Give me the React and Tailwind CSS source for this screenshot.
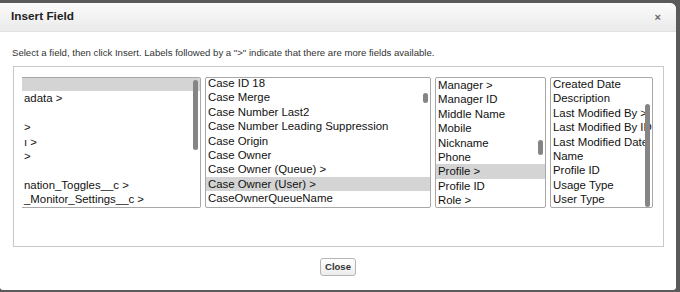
import React from 'react';

const lists = [
    {
        width: 'w-[179px]',
        first: 'border-l-0 rounded-l-none',
        offset: '-mt-[1px]',
        selected: 0,
        thumb: 'top-[2px] h-[70px]',
        items: ['', 'adata >', '', '>', '\u0131 >', '>', '', 'nation_Toggles__c >', '_Monitor_Settings__c >'],
    },
    {
        width: 'w-[226px]',
        first: '',
        offset: '-mt-[2px]',
        selected: 7,
        thumb: 'top-[15px] h-[10px]',
        items: ['Case ID 18', 'Case Merge', 'Case Number Last2', 'Case Number Leading Suppression', 'Case Origin', 'Case Owner', 'Case Owner (Queue) >', 'Case Owner (User) >', 'CaseOwnerQueueName'],
    },
    {
        width: 'w-[111px]',
        first: '',
        offset: '',
        selected: 6,
        thumb: 'top-[62px] h-[15px]',
        items: ['Manager >', 'Manager ID', 'Middle Name', 'Mobile', 'Nickname', 'Phone', 'Profile >', 'Profile ID', 'Role >'],
    },
    {
        width: 'w-[103px]',
        first: '',
        offset: '-mt-[1px]',
        selected: -1,
        thumb: 'top-[26px] h-[103px]',
        items: ['Created Date', 'Description', 'Last Modified By >', 'Last Modified By ID', 'Last Modified Date', 'Name', 'Profile ID', 'Usage Type', 'User Type'],
    },
];

const FieldList = ({ list }) => (
    <div className={`relative h-[131px] ${list.width} shrink-0 border border-[#a8a8a8] rounded-[2px] overflow-hidden bg-white ${list.first}`}>
        <div className={list.offset}>
            {list.items.map((item, i) => (
                <div
                    key={i}
                    className={`h-[14.4px] leading-[14.4px] pl-[2px] text-[11.4px] text-[#111] whitespace-nowrap ${i === list.selected ? 'bg-[#d4d4d4]' : ''}`}
                >
                    {item}
                </div>
            ))}
        </div>
        {/* scrollbar thumb */}
        <div className={`absolute right-[2px] w-[5px] rounded-full bg-[#858585] ${list.thumb}`}></div>
    </div>
);

const App = () => {
    return (
        <div className="w-[680px] h-[292px] bg-[#5a5a5a] pt-[3px] overflow-hidden font-['Liberation_Sans',Arial,sans-serif]">
            <div className="w-[676px] h-[287px] bg-white rounded-tr-[6px] rounded-b-[3px] overflow-hidden flex flex-col">
                {/* Header */}
                <div className="h-[29px] shrink-0 flex items-center justify-between pl-[11px] pr-[15px] bg-gradient-to-b from-[#fbfbfb] to-[#eaeaea] border-b border-[#e2e2e2]">
                    <h2 className="text-[11.8px] font-bold text-[#222]">Insert Field</h2>
                    <span className="text-[11px] font-bold text-[#666] leading-none">×</span>
                </div>

                {/* Body */}
                <p className="mt-[14px] pl-[12px] text-[9.6px] leading-[13px] text-[#333]">
                    Select a field, then click Insert. Labels followed by a "&gt;" indicate that there are more fields available.
                </p>

                <div className="mt-[7px] ml-[13px] w-[651px] h-[181px] border border-[#c9c9c9] pt-[10px] pl-[8px]">
                    <div className="flex gap-[4px]">
                        {lists.map((list, i) => (
                            <FieldList key={i} list={list} />
                        ))}
                    </div>
                </div>

                <div className="mt-[11px] flex justify-center">
                    <button className="h-[18px] px-[4px] rounded-[3px] border border-[#b5b5b5] bg-gradient-to-b from-white to-[#ececec] text-[9.5px] font-bold text-[#333] leading-none">
                        Close
                    </button>
                </div>
            </div>
        </div>
    );
};

export default App;
